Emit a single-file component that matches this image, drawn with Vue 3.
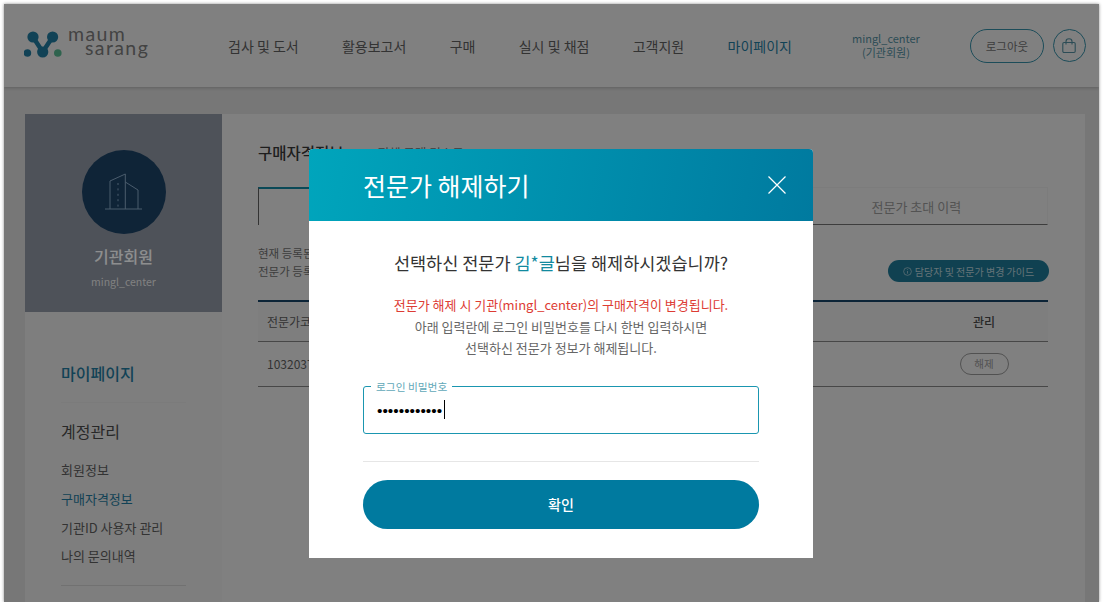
<template>
  <div class="window">
    <header class="top">
      <div class="logo">
        <svg class="logo-mark" width="40" height="30" viewBox="0 0 40 30">
          <path d="M9 7 L18.7 22 L28.6 7" fill="none" stroke="#1d6f8f" stroke-width="4.5" />
          <circle cx="9" cy="7" r="5.6" fill="#1d6f8f" />
          <circle cx="28.6" cy="7" r="5.6" fill="#1d6f8f" />
          <circle cx="18.7" cy="22" r="5.6" fill="#1d6f8f" />
          <circle cx="3.4" cy="23" r="3.8" fill="#1d6f8f" />
          <circle cx="33.8" cy="23" r="3.8" fill="#4fa582" />
        </svg>
        <div class="logo-text">
          <span>maum</span>
          <span class="second">sarang</span>
        </div>
      </div>
      <nav class="gnb">
        <a v-for="item in menu" :key="item" :class="{ on: item === '마이페이지' }">{{ item }}</a>
      </nav>
      <div class="user">mingl_center<br />(기관회원)</div>
      <button class="logout">로그아웃</button>
      <button class="cart">
        <svg width="16" height="16" viewBox="0 0 16 16" fill="none" stroke="#4a7f8f" stroke-width="1.1">
          <rect x="1.8" y="4.5" width="12.4" height="10" rx="1.2" />
          <path d="M5 6.5V3.4a3 2.6 0 0 1 6 0V6.5" />
        </svg>
      </button>
    </header>

    <div class="wrap">
      <aside class="side">
        <div class="profile">
          <div class="avatar">
            <svg width="84" height="84" viewBox="0 0 84 84" fill="none" stroke="#7d9ab5" stroke-width="1">
              <path d="M23 59H60" />
              <path d="M28 59V31L43.3 24V59" />
              <path d="M43.3 32L56 40V59" />
              <path d="M36 33V57" stroke-dasharray="2 3.4" />
            </svg>
          </div>
          <strong>기관회원</strong>
          <span>mingl_center</span>
        </div>
        <div class="side-menu">
          <h2>마이페이지</h2>
          <h3>계정관리</h3>
          <ul>
            <li>회원정보</li>
            <li class="on">구매자격정보</li>
            <li>기관ID 사용자 관리</li>
            <li>나의 문의내역</li>
          </ul>
        </div>
      </aside>

      <main class="content">
        <div class="title-row">
          <h1>구매자격정보</h1>
          <span>전체 구매 리스트</span>
        </div>
        <div class="tabs">
          <div class="tab active">전문가 관리</div>
          <div class="tab">담당자 관리</div>
          <div class="tab">전문가 초대 이력</div>
        </div>
        <div class="info-row">
          <p>현재 등록된 전문가 정보입니다.<br />전문가 등록 후 구매가 가능합니다.</p>
          <button class="guide">
            <svg width="9" height="9" viewBox="0 0 10 10" fill="none" stroke="#a9c0c8" stroke-width=".8">
              <circle cx="5" cy="5" r="4.3" />
              <path d="M5 4.4V7.4M5 2.6V3.4" />
            </svg>
            담당자 및 전문가 변경 가이드
          </button>
        </div>
        <table class="list">
          <thead>
            <tr>
              <th class="code">전문가코드</th>
              <th>전문가명</th>
              <th class="manage">관리</th>
            </tr>
          </thead>
          <tbody>
            <tr>
              <td class="code">1032037</td>
              <td>김*글</td>
              <td class="manage"><button class="release">해제</button></td>
            </tr>
          </tbody>
        </table>
      </main>
    </div>

    <div class="overlay">
      <section class="modal">
        <div class="modal-head">
          <h2>전문가 해제하기</h2>
          <svg width="20" height="20" viewBox="0 0 20 20" stroke="#fff" stroke-width="1.2">
            <path d="M1.5 1.5L18.5 18.5M18.5 1.5L1.5 18.5" />
          </svg>
        </div>
        <div class="modal-body">
          <p class="question">선택하신 전문가 <em>김*글</em>님을 해제하시겠습니까?</p>
          <p class="notice">
            <span>전문가 해제 시 기관(mingl_center)의 구매자격이 변경됩니다.</span><br />
            아래 입력란에 로그인 비밀번호를 다시 한번 입력하시면<br />
            선택하신 전문가 정보가 해제됩니다.
          </p>
          <fieldset class="field">
            <legend>로그인 비밀번호</legend>
            <input type="password" value="abcdefghijkl" readonly />
            <i class="caret"></i>
          </fieldset>
          <hr />
          <button class="confirm">확인</button>
        </div>
      </section>
    </div>
  </div>
</template>

<script setup>
const menu = ['검사 및 도서', '활용보고서', '구매', '실시 및 채점', '고객지원', '마이페이지']
</script>

<style>
body {
  background: #fff;
}
</style>

<style scoped>
* {
  box-sizing: border-box;
}

.window {
  position: relative;
  width: 1095px;
  height: 598px;
  margin: 4px 0 0 4px;
  overflow: hidden;
  background: #c6c6c6;
  box-shadow: 0 0 3px rgba(0, 0, 0, 0.45);
  font-family: "Noto Sans CJK KR", "Noto Sans", sans-serif;
  color: #444;
}

.top {
  display: flex;
  align-items: center;
  height: 83px;
  padding-left: 20px;
  background: #d6d6d6;
  box-shadow: 0 1px 3px rgba(0, 0, 0, 0.2);
  position: relative;
}

.logo {
  display: flex;
  align-items: center;
  width: 204px;
}

.logo-mark {
  margin-top: -2px;
}

.logo-text {
  display: flex;
  flex-direction: column;
  margin-left: 4px;
  margin-top: -10px;
  font-family: Lato, sans-serif;
  font-size: 19.5px;
  line-height: 14px;
  letter-spacing: 1.4px;
  color: #707070;
}

.logo-text .second {
  margin-left: 17px;
}

.gnb {
  display: flex;
  gap: 43.3px;
  font-size: 14px;
  color: #555;
}

.gnb .on {
  color: #1d6f8f;
}

.user {
  margin-left: 60px;
  width: 68px;
  margin-top: -2px;
  text-align: center;
  font-size: 11px;
  line-height: 14px;
  color: #4a7f8f;
}

.logout {
  width: 74px;
  height: 34px;
  margin-left: 50px;
  border: 1px solid #2f7f95;
  border-radius: 17px;
  background: none;
  font: 11.5px "Noto Sans CJK KR", sans-serif;
  color: #666;
}

.cart {
  display: flex;
  align-items: center;
  justify-content: center;
  width: 33px;
  height: 33px;
  margin-left: 9px;
  padding: 0;
  border: 1px solid #2f7f95;
  border-radius: 50%;
  background: none;
}

.wrap {
  display: flex;
  padding: 27px 14px 0 21px;
}

.side {
  flex: none;
  width: 197px;
  background: #d2d2d2;
}

.profile {
  display: flex;
  flex-direction: column;
  align-items: center;
  height: 198px;
  padding-top: 36px;
  background: #828994;
}

.avatar {
  width: 84px;
  height: 84px;
  border-radius: 50%;
  background: #193c5d;
}

.profile strong {
  margin-top: 10px;
  font-size: 16px;
  font-weight: 500;
  line-height: 24px;
  color: #fff;
  opacity: 0.85;
}

.profile span {
  margin-top: 6px;
  font-size: 10.5px;
  line-height: 16px;
  color: #d8d8d8;
}

.side-menu {
  padding: 49px 36px 0;
}

.side-menu h2 {
  margin: 0;
  height: 42px;
  border-bottom: 1px solid #cdcdcd;
  font-size: 16px;
  font-weight: 500;
  line-height: 24px;
  color: #1d6f8f;
}

.side-menu h3 {
  margin: 16px 0 0;
  font-size: 16px;
  font-weight: 400;
  line-height: 24px;
  color: #444;
}

.side-menu ul {
  margin: 12px 0 0;
  padding: 0 0 15px;
  list-style: none;
  border-bottom: 1px solid #bdbdbd;
  font-size: 13px;
}

.side-menu li {
  height: 28.8px;
  line-height: 29px;
  color: #555;
}

.side-menu li.on {
  color: #1d6f8f;
}

.content {
  flex: 1;
  height: 520px;
  padding: 26px 37px 0 36px;
  background: #d6d6d6;
}

.title-row {
  display: flex;
  align-items: center;
  gap: 34px;
  height: 24px;
}

.title-row h1 {
  margin: 0;
  font-size: 15.5px;
  font-weight: 500;
  color: #333;
}

.title-row span {
  font-size: 12.5px;
  color: #666;
}

.tabs {
  display: flex;
  height: 38px;
  margin-top: 23px;
}

.tab {
  flex: 1;
  display: flex;
  align-items: center;
  justify-content: center;
  border: 1px solid #cfcfcf;
  border-bottom: 1px solid #666;
  font-size: 13px;
  color: #8a8a8a;
}

.tab.active {
  border: 1px solid #555;
  border-top: 2px solid #127b91;
  border-bottom: 0;
}

.info-row {
  display: flex;
  justify-content: space-between;
  margin-top: 19px;
}

.info-row p {
  margin: 0;
  font-size: 11.5px;
  line-height: 18px;
  color: #666;
}

.guide {
  display: flex;
  align-items: center;
  justify-content: center;
  gap: 3px;
  width: 161px;
  height: 22px;
  margin-top: 16px;
  margin-right: -1px;
  border: 0;
  border-radius: 11px;
  background: #1b6d87;
  font: 10px "Noto Sans CJK KR", sans-serif;
  color: #a9c0c8;
}

.list {
  width: 100%;
  margin-top: 18px;
  border-collapse: collapse;
  border-top: 2px solid #143c5c;
  font-size: 12px;
}

.list th,
.list td {
  text-align: left;
  font-weight: 400;
  color: #555;
  border-bottom: 1px solid #777;
}

.list th {
  height: 40px;
  background: #d3d3d3;
}

.list td {
  height: 45px;
}

.list .code {
  width: 265px;
  padding-left: 9px;
}

.list .manage {
  width: 128px;
  text-align: center;
}

.list th.manage {
  font-weight: 500;
  color: #444;
}

.release {
  width: 49px;
  height: 22px;
  padding: 0;
  border: 1px solid #888;
  border-radius: 11px;
  background: none;
  font: 10.5px "Noto Sans CJK KR", sans-serif;
  color: #888;
}

.overlay {
  position: absolute;
  inset: 0;
  background: rgba(0, 0, 0, 0.4);
}

.modal {
  position: absolute;
  left: 305px;
  top: 145px;
  width: 504px;
  height: 409px;
  overflow: hidden;
  border-radius: 4px 4px 0 0;
  background: #fff;
}

.modal-head {
  display: flex;
  align-items: center;
  justify-content: space-between;
  height: 72px;
  padding: 0 26px 0 54px;
  background: linear-gradient(100deg, #00a5bc, #007a9f);
}

.modal-head h2 {
  margin: 0;
  font-size: 25px;
  font-weight: 400;
  color: #fff;
}

.modal-body {
  padding: 0 54px;
  text-align: center;
}

.question {
  margin: 28px 0 0;
  font-size: 17.5px;
  line-height: 28px;
  color: #333;
}

.question em {
  font-style: normal;
  color: #128a9f;
}

.notice {
  margin: 17px 0 0;
  font-size: 13px;
  line-height: 21.5px;
  color: #666;
}

.notice span {
  color: #dd3c34;
}

.field {
  position: relative;
  height: 53px;
  margin: 22px 0 0;
  padding: 0 7px;
  border: 1px solid #1a96b0;
  border-radius: 3px;
  text-align: left;
}

.field legend {
  margin-left: 0;
  padding: 0 5px;
  font-size: 10.7px;
  line-height: 11px;
  color: #5fa8b8;
}

.field input {
  display: block;
  width: 370px;
  height: 24px;
  margin: 7px 0 0 6px;
  padding: 0;
  border: 0;
  outline: 0;
  font: 15.5px Arial, "Liberation Sans", sans-serif;
  color: #000;
}

.caret {
  position: absolute;
  left: 80px;
  top: 8px;
  width: 1px;
  height: 19px;
  background: #000;
}

hr {
  height: 1px;
  margin: 27px 0 0;
  border: 0;
  background: #e6e6e6;
}

.confirm {
  width: 100%;
  height: 49px;
  margin-top: 18px;
  border: 0;
  border-radius: 25px;
  background: #007a9f;
  font: 500 14px "Noto Sans CJK KR", sans-serif;
  color: #fff;
}
</style>
